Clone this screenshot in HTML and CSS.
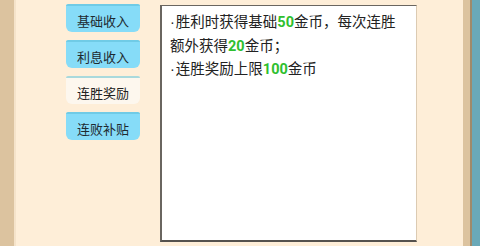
FILE: index.html
```html
<!DOCTYPE html>
<html lang="zh">
<head>
    <meta charset="UTF-8">
    <title>连胜奖励</title>
    <link rel="stylesheet" href="styles.css">
</head>
<body>
    <div class="frame">
        <div class="edge-l"></div>

        <div class="main">
            <!-- 左侧标签 -->
            <ul class="tabs">
                <li class="tab">基础收入</li>
                <li class="tab">利息收入</li>
                <li class="tab on">连胜奖励</li>
                <li class="tab">连败补贴</li>
            </ul>

            <!-- 说明面板 -->
            <div class="panel">
                <p><span class="dot">·</span>胜利时获得基础<b>50</b>金币，每次连胜额外获得<b>20</b>金币；</p>
                <p><span class="dot">·</span>连胜奖励上限<b>100</b>金币</p>
            </div>
        </div>

        <div class="edge-r">
            <span class="tan"></span>
            <span class="line"></span>
            <span class="teal"></span>
        </div>
    </div>
</body>
</html>
```

FILE: styles.css
```css
*{
    margin: 0;
    padding: 0;
    box-sizing: border-box;
}
body{
    width: 480px;
    height: 246px;
    overflow: hidden;
    background-color: #feeed8;
    font-family: "Noto Sans CJK SC", "Liberation Sans", sans-serif;
}
.frame{
    display: flex;
    height: 246px;
}

/* 左右边框 */
.edge-l{
    width: 16px;
    background-color: #dcc39f;
    border-right: 2px solid #f5e3ca;
}
.edge-r{
    display: flex;
    width: 17px;
}
.edge-r .tan{
    width: 7px;
    background-color: #dcc39f;
}
.edge-r .line{
    width: 2px;
    background-color: #a08a6a;
}
.edge-r .teal{
    flex: 1;
    background-color: #6aa9b8;
}

.main{
    flex: 1;
    display: flex;
    gap: 20px;
    padding: 4px 0 0 50px;
}

/* 탭 */
.tabs{
    list-style: none;
    display: flex;
    flex-direction: column;
    gap: 8px;
    width: 74px;
}
.tab{
    height: 28px;
    line-height: 27px;
    text-align: center;
    font-size: 13px;
    color: #1e2a30;
    background-color: #86dcf8;
    border-top: 2px solid #70cbe6;
    border-radius: 2px 2px 6px 6px;
    padding-top: 1px;
}
.tab.on{
    background-color: #fdf7ee;
    border-top-color: #a9d9dc;
    color: #222;
}

.panel{
    width: 257px;
    height: 237px;
    margin-top: 1px;
    padding: 3px 18px 0 8px;
    background-color: #fff;
    border-top: 1px solid #6a6660;
    border-left: 2px solid #6a6660;
    border-bottom: 2px solid #55524e;
    border-right: 1px solid #dccbb3;
    font-size: 14.5px;
    line-height: 23.5px;
    color: #222;
}
.panel .dot{
    font-family: "Liberation Sans", sans-serif;
    margin-right: 1px;
    line-height: 1;
}
.panel b{
    color: #2fbf2f;
    font-family: "Roboto", "Liberation Sans", sans-serif;
    font-weight: bold;
    line-height: 1;
}
```
